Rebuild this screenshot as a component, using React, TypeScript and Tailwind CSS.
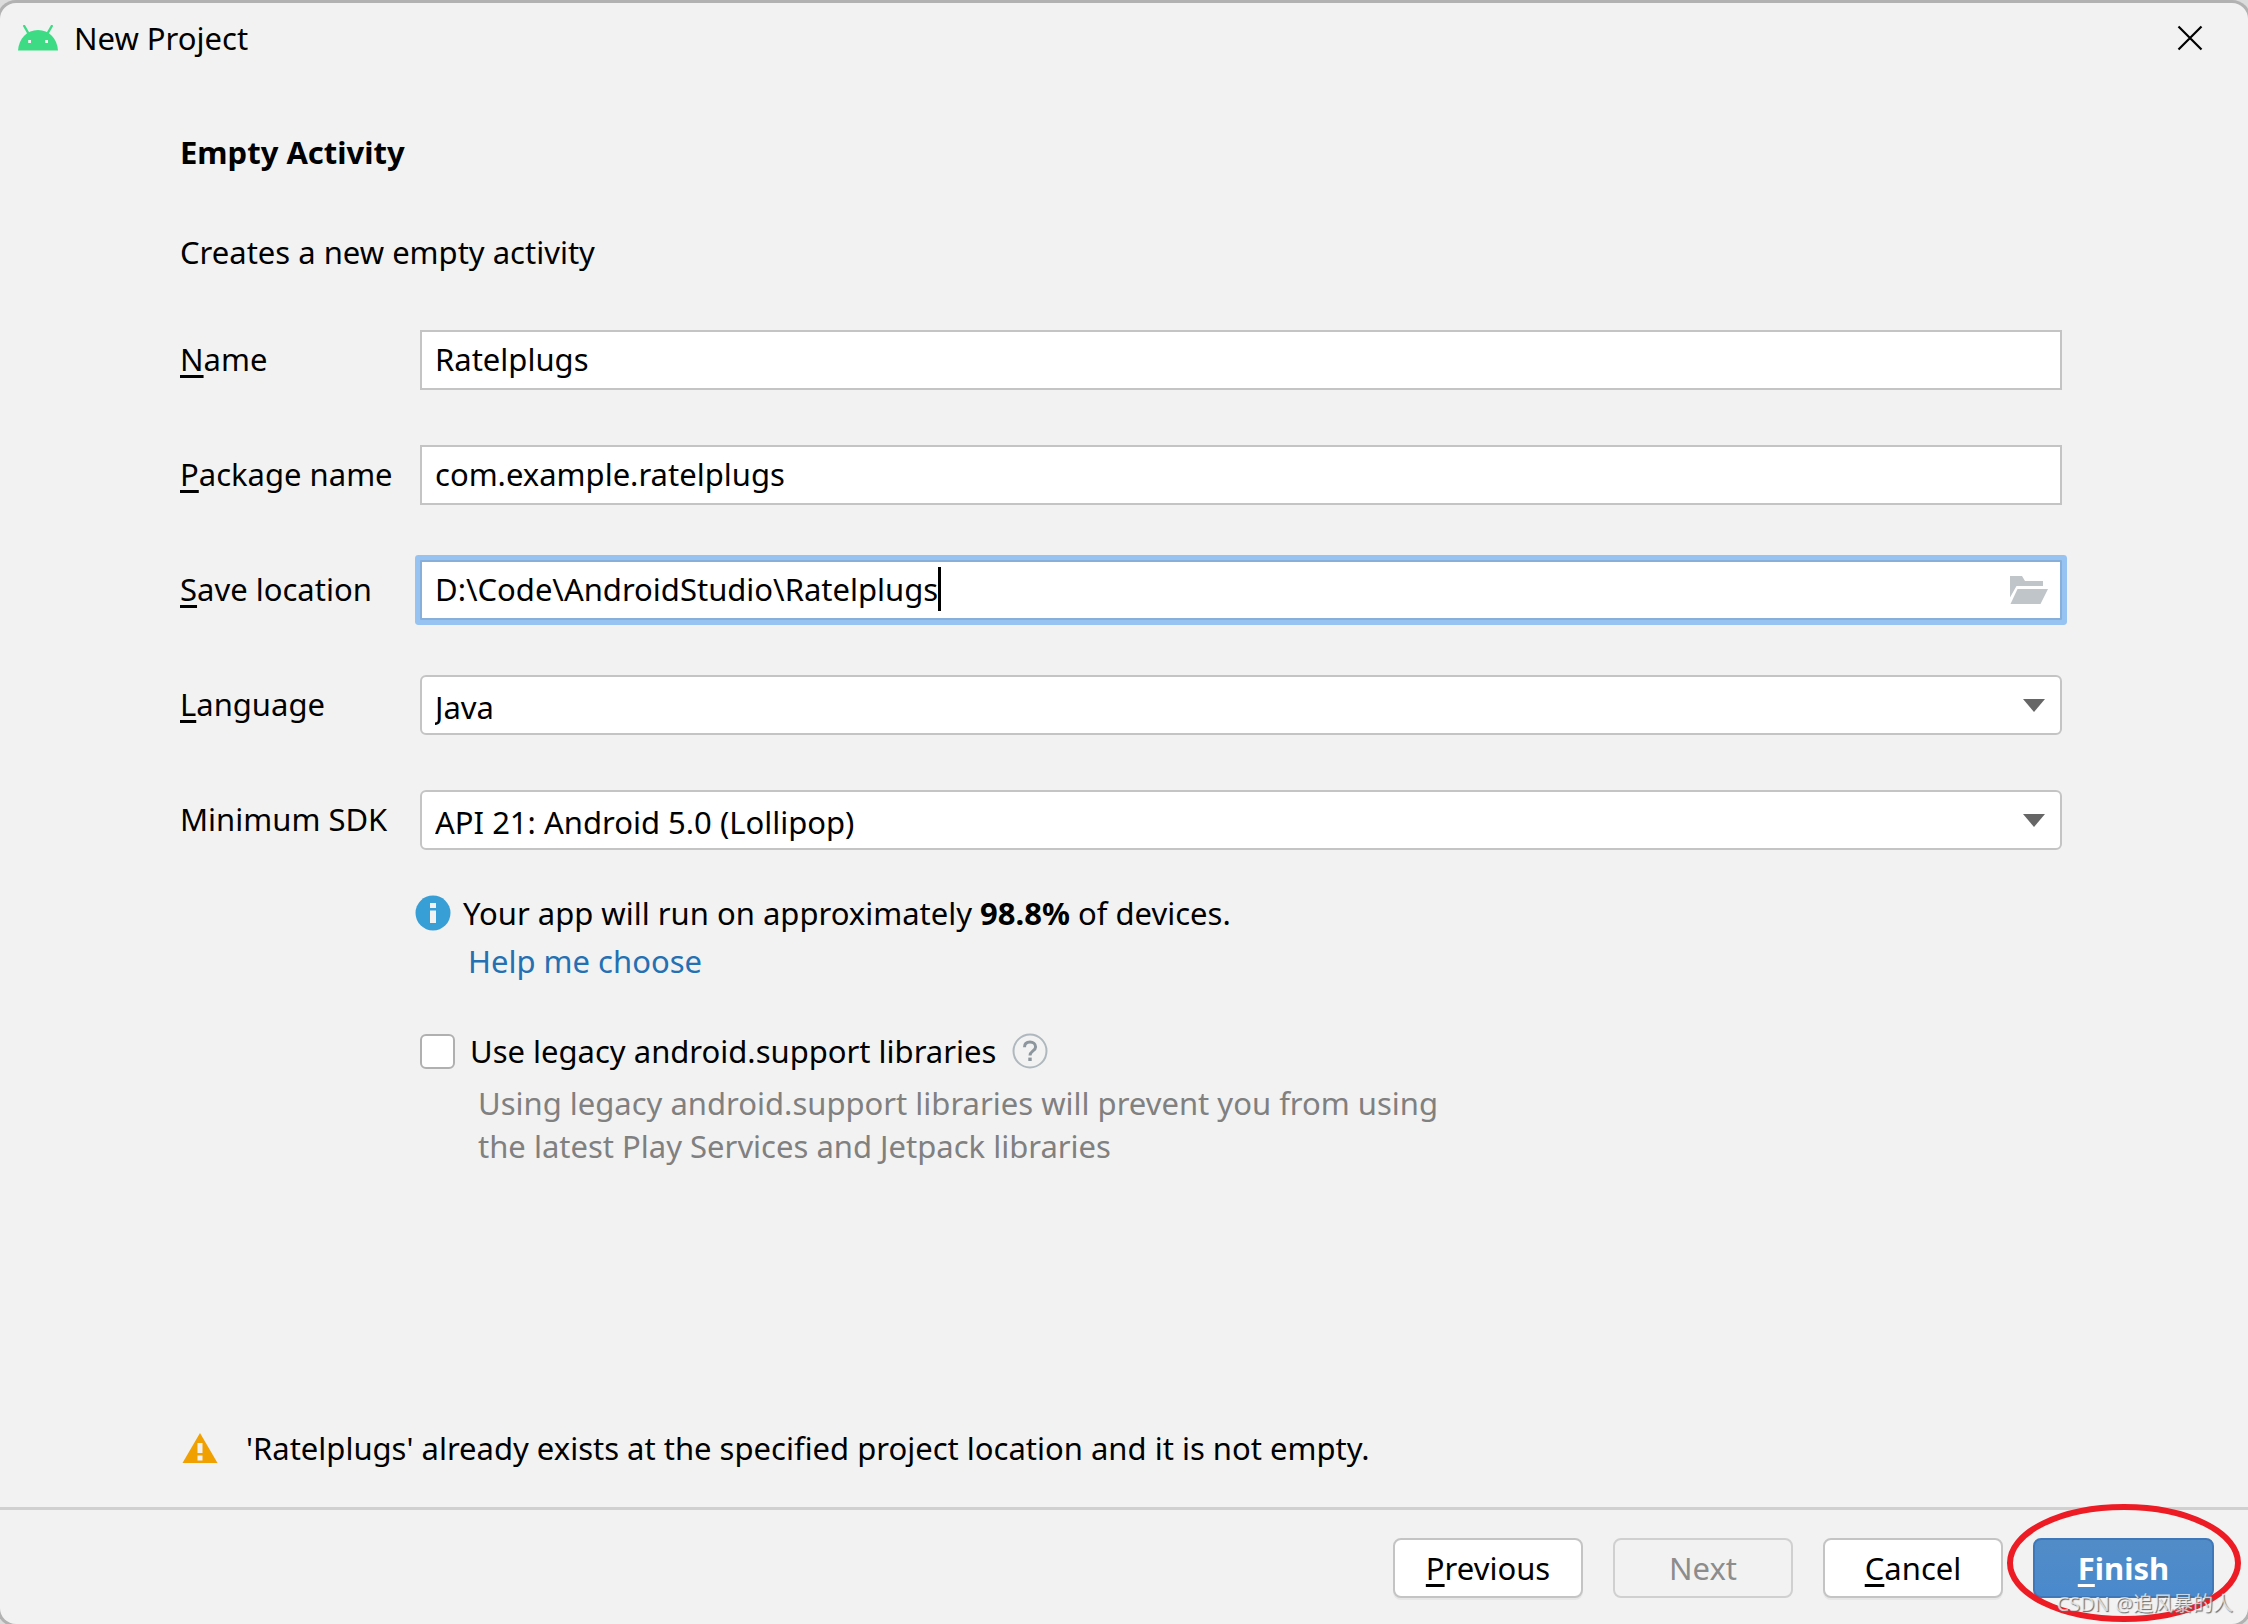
import type { ReactNode } from 'react';

const fieldBox = 'h-[60px] w-full border-2 border-[#c4c4c4] bg-white px-[13px] outline-none';

const Key = ({ children }: { children: string }) => (
  <span className="underline decoration-[3px] underline-offset-4 [text-decoration-skip-ink:none]">
    {children}
  </span>
);

const AndroidHead = () => (
  <svg width="40" height="26" viewBox="0 0 40 26" fill="#3ddc84">
    <path d="M0 25.500C0.800 13.600 9 5 20 5s19.200 8.600 20 20.500z" />
    <path d="M6.200 1l4.600 8M33.800 1l-4.600 8" stroke="#3ddc84" strokeWidth="2.400" strokeLinecap="round" />
    <path d="M10.200 15h2.800v3h-2.800zM27.200 15H30v3h-2.800z" fill="#f2f2f2" />
  </svg>
);

const FolderIcon = () => (
  <svg width="38" height="28" viewBox="0 0 38 28" fill="#bfc5c9">
    <path d="M0 0h12l3 5h18v5H6.500L0 21.500z" />
    <path d="M7.500 13H38l-7.500 15H0.500z" />
  </svg>
);

const InfoIcon = () => (
  <svg width="36" height="36" viewBox="0 0 36 36">
    <circle cx="18" cy="18" r="17.500" fill="#389fd6" />
    <path d="M15 8h6v5h-6zM15 15.500h6V28h-6z" fill="#f2f2f2" />
  </svg>
);

const HelpIcon = () => (
  <svg width="36" height="36" viewBox="0 0 36 36" fill="none">
    <circle cx="18" cy="18" r="16.500" stroke="#afb8be" strokeWidth="2" />
    <path
      d="M12.500 14.200c0-3.400 2.300-5.200 5.500-5.200s5.600 1.800 5.600 4.900c0 4-5.600 4-5.600 8.600"
      stroke="#8c969c"
      strokeWidth="3"
    />
    <path d="M16.300 24.600h3.400V28h-3.400z" fill="#8c969c" />
  </svg>
);

const WarningIcon = () => (
  <svg width="36" height="30" viewBox="0 0 36 30">
    <path d="M18 0l17.500 30H0.500z" fill="#f0a000" />
    <path d="M15.500 10h5v10h-5zM15.500 22.500h5V27.500h-5z" fill="#f2f2f2" />
  </svg>
);

const Row = ({ id, label, children }: { id: string; label: ReactNode; children: ReactNode }) => (
  <div className="flex items-center">
    <label htmlFor={id} className="w-60 shrink-0 pb-[3px]">
      {label}
    </label>
    {children}
  </div>
);

const Select = ({ id, value }: { id: string; value: string }) => (
  <div className="relative flex-1">
    <select id={id} className={`${fieldBox} appearance-none rounded-md pt-[3px]`}>
      <option>{value}</option>
    </select>
    <svg
      className="pointer-events-none absolute top-6 right-4"
      width="24"
      height="13"
      viewBox="0 0 24 13"
      fill="#666"
    >
      <path d="M1 0h22L12 13z" />
    </svg>
  </div>
);

const button = 'h-[60px] rounded-lg border-2';
const plainButton = 'border-[#c4c4c4] bg-white shadow-[0_2px_0_#e6e6e6]';

const App = () => {
  return (
    <div className="flex min-h-screen flex-col overflow-hidden bg-[#dcdcdc] pt-[3px] font-['Noto_Sans','Noto_Sans_CJK_SC',sans-serif] text-[31px] leading-[42px] text-black">
      <div className="flex flex-1 flex-col rounded-2xl bg-[#f2f2f2] shadow-[0_0_0_3px_#b2b2b2]">
        <header className="flex h-[70px] items-center pr-[45px] pl-[18px]">
          <AndroidHead />
          <span className="ml-4 flex-1">New Project</span>
          <button type="button" aria-label="Close">
            <svg width="26" height="26" viewBox="0 0 26 26" stroke="#000" strokeWidth="2.200">
              <path d="M1.500 1.500l23 23M24.500 1.500l-23 23" />
            </svg>
          </button>
        </header>

        <main className="flex flex-1 flex-col pr-[186px] pl-[180px]">
          <h1 className="mt-[58px] font-bold">Empty Activity</h1>
          <p className="mt-[58px]">Creates a new empty activity</p>

          <form className="mt-[57px] flex flex-col gap-[55px]">
            <Row id="name" label={<><Key>N</Key>ame</>}>
              <input id="name" type="text" defaultValue="Ratelplugs" className={`${fieldBox} pb-[3px]`} />
            </Row>
            <Row id="package" label={<><Key>P</Key>ackage name</>}>
              <input
                id="package"
                type="text"
                defaultValue="com.example.ratelplugs"
                className={`${fieldBox} pb-[3px]`}
              />
            </Row>
            <Row id="location" label={<><Key>S</Key>ave location</>}>
              <div className="flex h-[60px] flex-1 items-center rounded-[1px] border-2 border-[#87afda] bg-white pr-3 pl-[13px] ring-[5px] ring-[#97c3f3]">
                <input
                  id="location"
                  type="text"
                  defaultValue="D:\Code\AndroidStudio\Ratelplugs"
                  className="field-sizing-content pb-[3px] outline-none"
                />
                <span className="mb-[3px] h-11 w-[3px] bg-black" />
                <button type="button" aria-label="Browse" className="ml-auto">
                  <FolderIcon />
                </button>
              </div>
            </Row>
            <Row id="language" label={<><Key>L</Key>anguage</>}>
              <Select id="language" value="Java" />
            </Row>
            <Row id="sdk" label="Minimum SDK">
              <Select id="sdk" value="API 21: Android 5.0 (Lollipop)" />
            </Row>
          </form>

          <div className="mt-[42px] ml-[235px] flex items-center gap-3">
            <InfoIcon />
            <p>
              Your app will run on approximately <b>98.8%</b> of devices.
            </p>
          </div>
          <a href="#" className="mt-1.5 ml-[288px] self-start text-[#2470b3]">
            Help me choose
          </a>

          <div className="mt-12 ml-60 flex items-center">
            <input
              id="legacy"
              type="checkbox"
              className="size-[35px] appearance-none rounded-md border-2 border-[#b0b0b0] bg-white"
            />
            <label htmlFor="legacy" className="ml-[15px]">
              Use legacy android.support libraries
            </label>
            <button type="button" aria-label="Help" className="ml-4">
              <HelpIcon />
            </button>
          </div>
          <p className="mt-2.5 ml-[298px] leading-[43px] text-[#808080]">
            Using legacy android.support libraries will prevent you from using
            <br />
            the latest Play Services and Jetpack libraries
          </p>

          <div className="mt-auto mb-[38px] ml-0.5 flex items-center gap-7">
            <WarningIcon />
            <p>'Ratelplugs' already exists at the specified project location and it is not empty.</p>
          </div>
        </main>

        <footer className="relative flex h-[117px] items-start justify-end border-t-[3px] border-[#d0d0d0] pt-7 pr-[34px]">
          <button type="button" className={`${button} ${plainButton} w-[190px]`}>
            <Key>P</Key>revious
          </button>
          <button type="button" disabled className={`${button} ml-[30px] w-[180px] border-[#d0d0d0] text-[#8c8c8c]`}>
            Next
          </button>
          <button type="button" className={`${button} ${plainButton} ml-[30px] w-[180px]`}>
            <Key>C</Key>ancel
          </button>
          <button
            type="button"
            className={`${button} ml-[30px] w-[181px] border-[#3f78b8] bg-linear-to-b from-[#528cc7] to-[#4989cc] font-bold text-white`}
          >
            <Key>F</Key>inish
          </button>

          <svg
            className="pointer-events-none absolute right-[6px] bottom-[2px]"
            width="236"
            height="118"
            viewBox="0 0 236 118"
            fill="none"
          >
            <ellipse cx="118" cy="59" rx="114" ry="56" stroke="#ed1c24" strokeWidth="6" />
          </svg>
          <span className="absolute right-[15px] bottom-1.5 text-[20px] leading-7 text-white/70 [text-shadow:1px_1px_1px_#666]">
            CSDN @追风暴的人
          </span>
        </footer>
      </div>
    </div>
  );
};

export default App;
